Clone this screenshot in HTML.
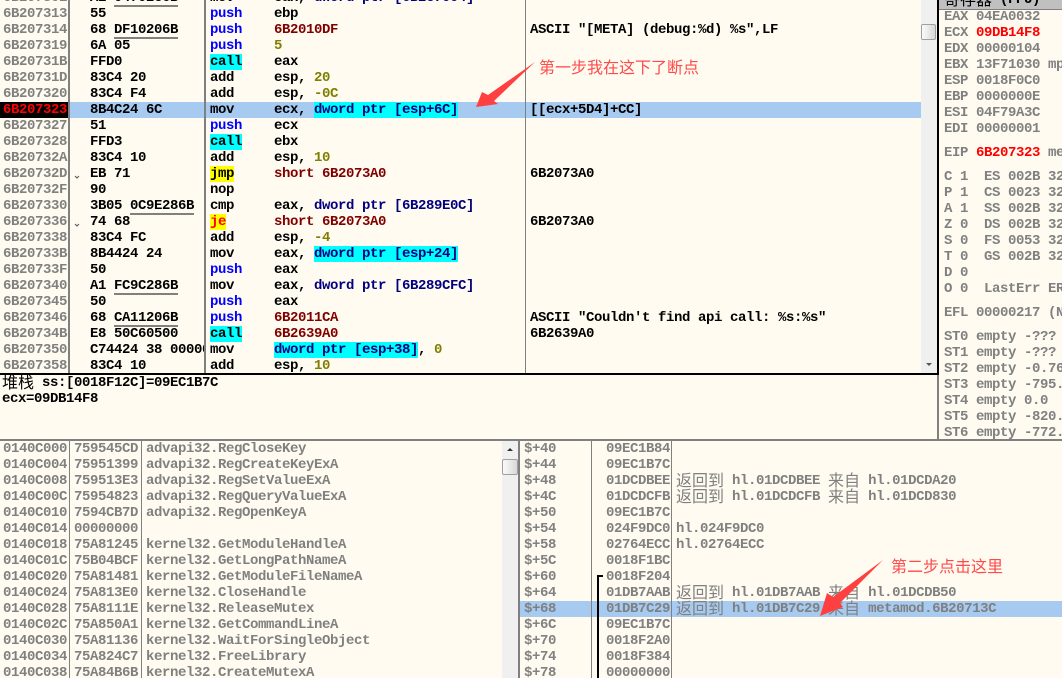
<!DOCTYPE html>
<html><head><meta charset="utf-8"><style>
html,body{margin:0;padding:0;background:#fffbf0}
#p{position:relative;width:1062px;height:678px;overflow:hidden;background:#fffbf0;font:bold 14px/16px "Liberation Mono","Noto Sans CJK SC",monospace;letter-spacing:-0.4px;color:#000}
#p div{position:absolute}
.r{left:0;height:16px;width:921px;white-space:pre}
.r span{position:absolute;top:0;white-space:pre}
.a{left:3px;color:#808080}.h{left:90px;width:114px;overflow:hidden}.m{left:210px}.o{left:274px}.c{left:530px}
.u{text-decoration:none;border-bottom:2px solid #808080;position:static!important;height:15px;display:inline-block}
i{font-style:normal}
.b{color:#00f}.n{color:#000080}.k{color:#808000}.t{color:#800000}.cy{background:#0ff}.ye{background:#ff0}
.r .mc{left:210px;width:32px;background:#0ff;color:#000;height:16px}
.r .mj{left:210px;width:24px;background:#ff0;height:16px}
.r .mq{left:210px;width:16px;background:#ff0;color:#f00;height:16px}
.v{position:static!important;background:#0ff;color:#000080;display:inline-block;height:16px}
.l{background:#808080}
.x{left:944px;color:#808080;white-space:pre;height:16px}
.x b{color:#f00}
.s{left:0;width:518px;height:16px;color:#808080;white-space:pre}
.s span{position:absolute;top:0}.s1{left:3px}.s2{left:74px}.s3{left:146px}
.q{left:520px;width:542px;height:16px;color:#808080;white-space:pre}
.q span{position:absolute;top:0}.q1{left:4px}.q2{left:86px}.q3{left:156px}
.z{font-weight:normal;font-size:16px;font-family:"Noto Sans CJK SC",sans-serif;line-height:0;letter-spacing:0;position:relative;top:2px}
.sb{background:#f0f0f0}
.th{background:linear-gradient(90deg,#fafafa,#d8d8d8);border:1px solid #a0a0a0;border-radius:2px;box-sizing:border-box}
.an{color:#ff4a4a;font:normal 16px/20px "Noto Sans CJK SC",sans-serif;letter-spacing:0;white-space:pre}
</style></head><body><div id="p">

<div class="r" style="top:-10px"><span class="a">6B20730E</span><span class="h">A1 <i class="u">04702C6B</i></span><span class="m">mov</span><span class="o">eax, <i class="n">dword ptr [6B2C7004]</i></span></div>
<div class="r" style="top:6px"><span class="a">6B207313</span><span class="h">55</span><span class="m b">push</span><span class="o">ebp</span></div>
<div class="r" style="top:22px"><span class="a">6B207314</span><span class="h">68 <i class="u">DF10206B</i></span><span class="m b">push</span><span class="o t">6B2010DF</span><span class="c">ASCII "[META] (debug:%d) %s",LF</span></div>
<div class="r" style="top:38px"><span class="a">6B207319</span><span class="h">6A 05</span><span class="m b">push</span><span class="o k">5</span></div>
<div class="r" style="top:54px"><span class="a">6B20731B</span><span class="h">FFD0</span><span class="mc">call</span><span class="o">eax</span></div>
<div class="r" style="top:70px"><span class="a">6B20731D</span><span class="h">83C4 20</span><span class="m">add</span><span class="o">esp, <i class="k">20</i></span></div>
<div class="r" style="top:86px"><span class="a">6B207320</span><span class="h">83C4 F4</span><span class="m">add</span><span class="o">esp, <i class="k">-0C</i></span></div>
<div class="r" style="top:102px;background:#a6caf0"><span class="a" style="left:0;width:69px;height:16px;background:#000;color:#f00;padding-left:3px;box-sizing:border-box">6B207323</span><span class="h">8B4C24 6C</span><span class="m">mov</span><span class="o">ecx, <i class="v">dword ptr [esp+6C]</i></span><span class="c">[[ecx+5D4]+CC]</span></div>
<div class="r" style="top:118px"><span class="a">6B207327</span><span class="h">51</span><span class="m b">push</span><span class="o">ecx</span></div>
<div class="r" style="top:134px"><span class="a">6B207328</span><span class="h">FFD3</span><span class="mc">call</span><span class="o">ebx</span></div>
<div class="r" style="top:150px"><span class="a">6B20732A</span><span class="h">83C4 10</span><span class="m">add</span><span class="o">esp, <i class="k">10</i></span></div>
<div class="r" style="top:166px"><span class="a">6B20732D</span><span class="h">EB 71</span><span class="mj">jmp</span><span class="o t">short 6B2073A0</span><span class="c">6B2073A0</span></div>
<div class="r" style="top:182px"><span class="a">6B20732F</span><span class="h">90</span><span class="m">nop</span></div>
<div class="r" style="top:198px"><span class="a">6B207330</span><span class="h">3B05 <i class="u">0C9E286B</i></span><span class="m">cmp</span><span class="o">eax, <i class="n">dword ptr [6B289E0C]</i></span></div>
<div class="r" style="top:214px"><span class="a">6B207336</span><span class="h">74 68</span><span class="mq">je</span><span class="o t">short 6B2073A0</span><span class="c">6B2073A0</span></div>
<div class="r" style="top:230px"><span class="a">6B207338</span><span class="h">83C4 FC</span><span class="m">add</span><span class="o">esp, <i class="k">-4</i></span></div>
<div class="r" style="top:246px"><span class="a">6B20733B</span><span class="h">8B4424 24</span><span class="m">mov</span><span class="o">eax, <i class="v">dword ptr [esp+24]</i></span></div>
<div class="r" style="top:262px"><span class="a">6B20733F</span><span class="h">50</span><span class="m b">push</span><span class="o">eax</span></div>
<div class="r" style="top:278px"><span class="a">6B207340</span><span class="h">A1 <i class="u">FC9C286B</i></span><span class="m">mov</span><span class="o">eax, <i class="n">dword ptr [6B289CFC]</i></span></div>
<div class="r" style="top:294px"><span class="a">6B207345</span><span class="h">50</span><span class="m b">push</span><span class="o">eax</span></div>
<div class="r" style="top:310px"><span class="a">6B207346</span><span class="h">68 <i class="u">CA11206B</i></span><span class="m b">push</span><span class="o t">6B2011CA</span><span class="c">ASCII "Couldn't find api call: %s:%s"</span></div>
<div class="r" style="top:326px"><span class="a">6B20734B</span><span class="h">E8 50C60500</span><span class="mc">call</span><span class="o t">6B2639A0</span><span class="c">6B2639A0</span></div>
<div class="r" style="top:342px"><span class="a">6B207350</span><span class="h">C74424 38 00000000</span><span class="m">mov</span><span class="o"><i class="v">dword ptr [esp+38]</i>, <i class="k">0</i></span></div>
<div class="r" style="top:358px"><span class="a">6B207358</span><span class="h">83C4 10</span><span class="m">add</span><span class="o">esp, <i class="k">10</i></span></div>

<svg style="position:absolute;left:0;top:0" width="100" height="240"><polyline points="75,176 77,178 79,176" fill="none" stroke="#555" stroke-width="1"/><polyline points="75,224 77,226 79,224" fill="none" stroke="#555" stroke-width="1"/></svg>

<div class="l" style="left:68px;top:0;width:2px;height:373px"></div>
<div class="l" style="left:204px;top:0;width:2px;height:373px"></div>
<div class="l" style="left:525px;top:0;width:1px;height:373px"></div>

<div class="sb" style="left:921px;top:0;width:16px;height:373px"></div>
<div class="th" style="left:921px;top:24px;width:15px;height:16px"></div>
<svg style="position:absolute;left:921px;top:360px" width="16" height="10"><polygon points="5,3 11,3 8,6" fill="#555"/></svg>

<div style="left:939px;top:0;width:123px;height:10px;background:#c0c0c0;overflow:hidden"><span style="position:absolute;left:5px;top:-8px;color:#000;white-space:pre"><i class="z">寄存器</i> (FPU)</span></div>
<div style="left:939px;top:9px;width:123px;height:1px;background:#808080"></div>

<div class="x" style="top:9px">EAX 04EA0032</div>
<div class="x" style="top:25px">ECX <b>09DB14F8</b></div>
<div class="x" style="top:41px">EDX 00000104</div>
<div class="x" style="top:57px">EBX 13F71030 mp</div>
<div class="x" style="top:73px">ESP 0018F0C0</div>
<div class="x" style="top:89px">EBP 0000000E</div>
<div class="x" style="top:105px">ESI 04F79A3C</div>
<div class="x" style="top:121px">EDI 00000001</div>
<div class="x" style="top:145px">EIP <b>6B207323</b> me</div>
<div class="x" style="top:169px">C 1  ES 002B 32</div>
<div class="x" style="top:185px">P 1  CS 0023 32</div>
<div class="x" style="top:201px">A 1  SS 002B 32</div>
<div class="x" style="top:217px">Z 0  DS 002B 32</div>
<div class="x" style="top:233px">S 0  FS 0053 32</div>
<div class="x" style="top:249px">T 0  GS 002B 32</div>
<div class="x" style="top:265px">D 0</div>
<div class="x" style="top:281px">O 0  LastErr ER</div>
<div class="x" style="top:305px">EFL 00000217 (N</div>
<div class="x" style="top:329px">ST0 empty -???</div>
<div class="x" style="top:345px">ST1 empty -???</div>
<div class="x" style="top:361px">ST2 empty -0.76</div>
<div class="x" style="top:377px">ST3 empty -795.</div>
<div class="x" style="top:393px">ST4 empty 0.0</div>
<div class="x" style="top:409px">ST5 empty -820.</div>
<div class="x" style="top:425px;height:14px;overflow:hidden">ST6 empty -772.</div>

<div style="left:0;top:373px;width:939px;height:2px;background:#000"></div>
<div style="left:937px;top:0;width:2px;height:375px;background:#000"></div>
<div class="l" style="left:937px;top:375px;width:2px;height:65px"></div>

<div style="left:2px;top:375px;white-space:pre"><i class="z">堆栈</i> ss:[0018F12C]=09EC1B7C</div>
<div style="left:2px;top:391px;white-space:pre">ecx=09DB14F8</div>

<div class="l" style="left:0;top:439px;width:1062px;height:2px"></div>

<div class="s" style="top:441px"><span class="s1">0140C000</span><span class="s2">759545CD</span><span class="s3">advapi32.RegCloseKey</span></div>
<div class="s" style="top:457px"><span class="s1">0140C004</span><span class="s2">75951399</span><span class="s3">advapi32.RegCreateKeyExA</span></div>
<div class="s" style="top:473px"><span class="s1">0140C008</span><span class="s2">759513E3</span><span class="s3">advapi32.RegSetValueExA</span></div>
<div class="s" style="top:489px"><span class="s1">0140C00C</span><span class="s2">75954823</span><span class="s3">advapi32.RegQueryValueExA</span></div>
<div class="s" style="top:505px"><span class="s1">0140C010</span><span class="s2">7594CB7D</span><span class="s3">advapi32.RegOpenKeyA</span></div>
<div class="s" style="top:521px"><span class="s1">0140C014</span><span class="s2">00000000</span></div>
<div class="s" style="top:537px"><span class="s1">0140C018</span><span class="s2">75A81245</span><span class="s3">kernel32.GetModuleHandleA</span></div>
<div class="s" style="top:553px"><span class="s1">0140C01C</span><span class="s2">75B04BCF</span><span class="s3">kernel32.GetLongPathNameA</span></div>
<div class="s" style="top:569px"><span class="s1">0140C020</span><span class="s2">75A81481</span><span class="s3">kernel32.GetModuleFileNameA</span></div>
<div class="s" style="top:585px"><span class="s1">0140C024</span><span class="s2">75A813E0</span><span class="s3">kernel32.CloseHandle</span></div>
<div class="s" style="top:601px"><span class="s1">0140C028</span><span class="s2">75A8111E</span><span class="s3">kernel32.ReleaseMutex</span></div>
<div class="s" style="top:617px"><span class="s1">0140C02C</span><span class="s2">75A850A1</span><span class="s3">kernel32.GetCommandLineA</span></div>
<div class="s" style="top:633px"><span class="s1">0140C030</span><span class="s2">75A81136</span><span class="s3">kernel32.WaitForSingleObject</span></div>
<div class="s" style="top:649px"><span class="s1">0140C034</span><span class="s2">75A824C7</span><span class="s3">kernel32.FreeLibrary</span></div>
<div class="s" style="top:665px"><span class="s1">0140C038</span><span class="s2">75A84B6B</span><span class="s3">kernel32.CreateMutexA</span></div>

<div class="l" style="left:69px;top:441px;width:1px;height:237px"></div>
<div class="l" style="left:141px;top:441px;width:1px;height:237px"></div>

<div class="sb" style="left:502px;top:441px;width:16px;height:237px"></div>
<svg style="position:absolute;left:502px;top:445px" width="16" height="10"><polygon points="5,6 11,6 8,3" fill="#333"/></svg>
<div class="th" style="left:502px;top:459px;width:16px;height:16px"></div>
<div class="l" style="left:518px;top:441px;width:2px;height:237px"></div>

<div style="left:520px;top:601px;width:542px;height:16px;background:#a6caf0"></div>
<div class="q" style="top:441px"><span class="q1">$+40</span><span class="q2">09EC1B84</span></div>
<div class="q" style="top:457px"><span class="q1">$+44</span><span class="q2">09EC1B7C</span></div>
<div class="q" style="top:473px"><span class="q1">$+48</span><span class="q2">01DCDBEE</span><span class="q3"><i class="z">返回到</i> hl.01DCDBEE <i class="z">来自</i> hl.01DCDA20</span></div>
<div class="q" style="top:489px"><span class="q1">$+4C</span><span class="q2">01DCDCFB</span><span class="q3"><i class="z">返回到</i> hl.01DCDCFB <i class="z">来自</i> hl.01DCD830</span></div>
<div class="q" style="top:505px"><span class="q1">$+50</span><span class="q2">09EC1B7C</span></div>
<div class="q" style="top:521px"><span class="q1">$+54</span><span class="q2">024F9DC0</span><span class="q3">hl.024F9DC0</span></div>
<div class="q" style="top:537px"><span class="q1">$+58</span><span class="q2">02764ECC</span><span class="q3">hl.02764ECC</span></div>
<div class="q" style="top:553px"><span class="q1">$+5C</span><span class="q2">0018F1BC</span></div>
<div class="q" style="top:569px"><span class="q1">$+60</span><span class="q2">0018F204</span></div>
<div class="q" style="top:585px"><span class="q1">$+64</span><span class="q2">01DB7AAB</span><span class="q3"><i class="z">返回到</i> hl.01DB7AAB <i class="z">来自</i> hl.01DCDB50</span></div>
<div class="q" style="top:601px"><span class="q1">$+68</span><span class="q2">01DB7C29</span><span class="q3"><i class="z">返回到</i> hl.01DB7C29 <i class="z">来自</i> metamod.6B20713C</span></div>
<div class="q" style="top:617px"><span class="q1">$+6C</span><span class="q2">09EC1B7C</span></div>
<div class="q" style="top:633px"><span class="q1">$+70</span><span class="q2">0018F2A0</span></div>
<div class="q" style="top:649px"><span class="q1">$+74</span><span class="q2">0018F384</span></div>
<div class="q" style="top:665px"><span class="q1">$+78</span><span class="q2">00000000</span></div>

<div class="l" style="left:591px;top:441px;width:1px;height:237px"></div>
<div class="l" style="left:671px;top:441px;width:1px;height:237px"></div>
<div style="left:597px;top:575px;width:2px;height:103px;background:#000"></div>
<div style="left:597px;top:575px;width:6px;height:2px;background:#000"></div>

<svg style="position:absolute;left:0;top:0" width="1062" height="678"><polygon points="476,107 482,92 488,95 535,62 494,101 498,104" fill="#ff4040"/><polygon points="820,616 827,593 833,597 883,560 840,603 843,607" fill="#ff4040"/></svg>
<div class="an" style="left:539px;top:56px">第一步我在这下了断点</div>
<div class="an" style="left:891px;top:555px">第二步点击这里</div>
</div></body></html>
